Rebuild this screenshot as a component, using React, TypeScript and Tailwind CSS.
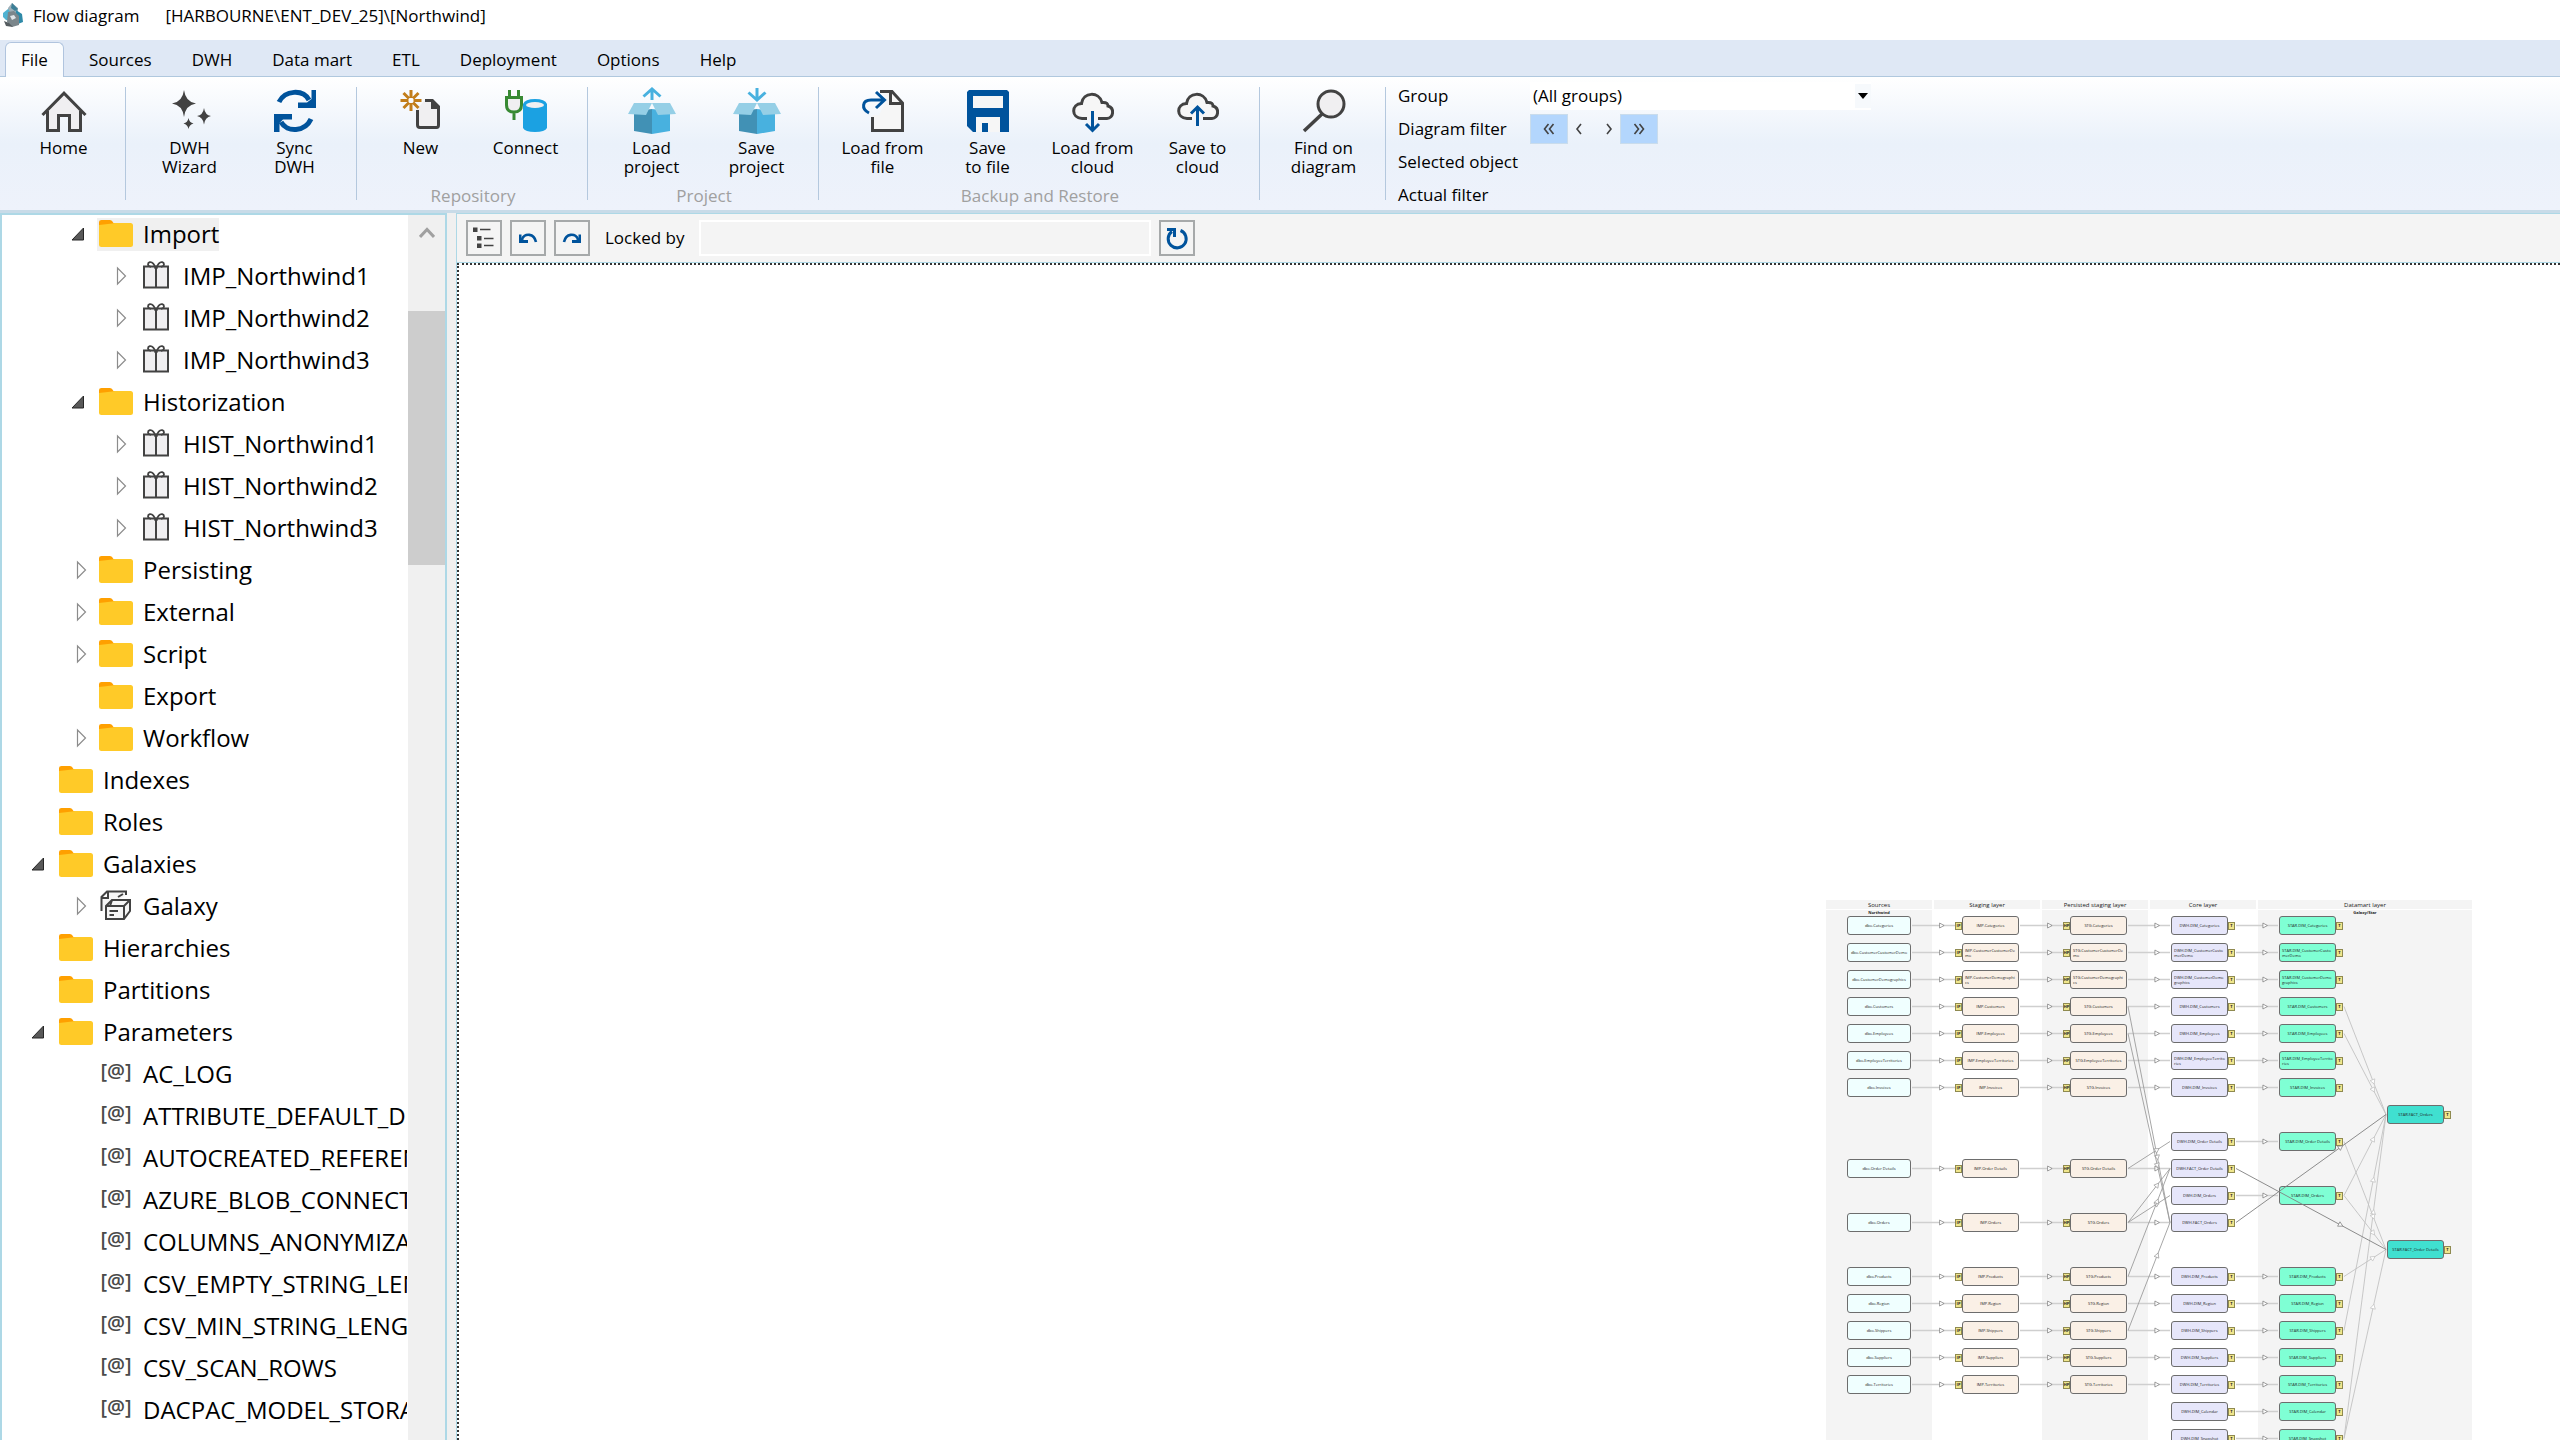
import { useState } from "react";
import type { ReactNode } from "react";
import clsx from "clsx";

/* ---------- icons ---------- */

type IconProps = { children: ReactNode };

function RibbonIcon({ children }: IconProps) {
  return (
    <svg viewBox="0 0 48 48" className="size-12" fill="none" aria-hidden="true">
      {children}
    </svg>
  );
}

const HomeIcon = () => (
  <RibbonIcon>
    <path d="M8 23V43.5H19V28.5H29V43.5H40V23L24 6Z" fill="#f0eff1" />
    <path
      d="M2.5 28 24 6.200L45.500 28M7.500 24V43.500H18.500V28.500H29.500V43.500H40.500V24"
      stroke="#424242"
      strokeWidth="3"
    />
  </RibbonIcon>
);

const WizardIcon = () => (
  <RibbonIcon>
    <g fill="#424242">
      <path d="M18 3Q19.500 15 30 16.500Q19.500 18 18 30Q16.500 18 6 16.500Q16.500 15 18 3Z" />
      <path d="M38 21Q39 28 45 29Q39 30 38 37.500Q37 30 31 29Q37 28 38 21Z" />
      <path d="M22.500 31Q23.300 35.500 27.500 36.500Q23.300 37.500 22.500 42Q21.700 37.500 17.500 36.500Q21.700 35.500 22.500 31Z" />
    </g>
  </RibbonIcon>
);

const SyncIcon = () => (
  <RibbonIcon>
    <path d="M8 15C14 3 32 2 38 13" stroke="#00539c" strokeWidth="5" />
    <path d="M45 3V21H27V15.500H36L40.500 12V3Z" fill="#00539c" />
    <path d="M40 32C34 45 16 46 10 35" stroke="#00539c" strokeWidth="5" />
    <path d="M3 45V27H21V32.500H12L8.500 36V45Z" fill="#00539c" />
  </RibbonIcon>
);

const NewIcon = () => (
  <RibbonIcon>
    <path d="M20 22V40.500H42V18L36 13H28Z" fill="#f0eff1" />
    <path d="M20.500 23V38Q20.500 40.500 23 40.500H39.500Q41.500 40.500 41.500 38V20" stroke="#424242" strokeWidth="3" />
    <path d="M28 12H36L43 19V22H34V15H28Z" fill="#424242" />
    <path
      d="M14 3V11M14 16V24M3.500 13.500H11.500M16.500 13.500H24.500M6.500 6 12 11.500M16 15.500 21.500 21M21.500 6 16 11.500M12 15.500 6.500 21"
      stroke="#c27d1a"
      strokeWidth="3"
    />
  </RibbonIcon>
);

const ConnectIcon = () => (
  <RibbonIcon>
    <path d="M4.500 10V18Q4.500 25 12 25Q19.500 25 19.500 18V10Z" fill="#f0eff1" />
    <path d="M7.500 3V10M16.500 3V10M3 10.500H21M4.500 10V18Q4.500 25 12 25Q19.500 25 19.500 18V10M12 25V33" stroke="#388a34" strokeWidth="3" />
    <path d="M21 17V41Q23 45 33 45Q43 45 45 41V17Q43 12 33 12Q23 12 21 17Z" fill="#1ba1e2" />
    <ellipse cx="33" cy="18" rx="9" ry="3" fill="#f0eff1" />
  </RibbonIcon>
);

function BoxIcon({ up }: { up?: boolean }) {
  return (
    <RibbonIcon>
      <path d="M6 24V44L24 47V22Z" fill="#4191b5" />
      <path d="M24 22V47L42 44V24Z" fill="#48b1df" />
      <path d="M6 16H24L18 28L0 27Z" fill="#95cfe6" />
      <path d="M42 16H24L30 28L48 27Z" fill="#95cfe6" />
      <path
        d={up ? "M24 13V2M15.500 9.500 24 2L32.500 9.500" : "M24 1V12M15.500 5.500 24 13L32.500 5.500"}
        stroke="#48b1df"
        strokeWidth="3"
      />
    </RibbonIcon>
  );
}

const LoadFileIcon = () => (
  <RibbonIcon>
    <path d="M22 4.500H32L43.500 16V43.500H13.500V28H20L28 13Z" fill="#f6f6f6" />
    <path d="M21 4.500H33L43.500 16V43.500H13.500V30M31.500 4V16.500H44" stroke="#424242" strokeWidth="3" />
    <path d="M10 26C2 22 3 13 12 13H25M17 5 25.500 13 17 21" stroke="#00539c" strokeWidth="3" />
  </RibbonIcon>
);

const SaveFileIcon = () => (
  <RibbonIcon>
    <path d="M5 3H43L45 5V45H9L3 39V5Z" fill="#00539c" />
    <path d="M9 9H39V21H9ZM12 30H36V45H24V36H18V45H12Z" fill="#f6f6f6" />
  </RibbonIcon>
);

function CloudIcon({ up }: { up?: boolean }) {
  return (
    <RibbonIcon>
      <path
        d="M18 31.500H13C2 31 2 17 12.500 16.500C14 5 30 4 33 15.500C38 15 39 17 39 19C46 21 44.500 31.500 38 31.500H29"
        fill="#f6f6f6"
        stroke="#424242"
        strokeWidth="3"
      />
      <path
        d={up ? "M23.500 39V20M17 26.500 23.500 20L30 26.500" : "M23.500 24V43M17 37 23.500 43.500L30 37"}
        stroke="#00539c"
        strokeWidth="3"
      />
    </RibbonIcon>
  );
}

const FindIcon = () => (
  <RibbonIcon>
    <circle cx="31" cy="17" r="13" fill="#f0eff1" stroke="#424242" strokeWidth="3" />
    <path d="M22 27 4 44" stroke="#424242" strokeWidth="3.500" />
  </RibbonIcon>
);

const AppLogo = () => (
  <svg viewBox="0 0 20 24" className="h-6 w-5" aria-hidden="true">
    <path d="M9 0 15 5V11L9 9L5 11V5Z" fill="#9fb0b8" />
    <path d="M9 0 15 6 12 8L8 5Z" fill="#3c7f97" />
    <path d="M0 10 5 6 8 10V18L3 17L0 14Z" fill="#4fb3d2" />
    <path d="M13 7 19 11 20 19 15 21 12 16Z" fill="#2f8aa8" />
    <path d="M5 9 11 8 16 13V22L9 24L4 19Z" fill="#7b868b" />
    <path d="M7 13 11 12 13 15 9 17Z" fill="#dfe5e8" />
    <path d="M1 18 6 20 10 24 3 23Z" fill="#555c60" />
  </svg>
);

const FolderIcon = () => (
  <svg viewBox="0 0 34 27" className="h-[27px] w-[34px]" aria-hidden="true">
    <path d="M0 10V2Q0 0 2.500 0H11Q13 0 14.500 3H20V10Z" fill="#ffa000" />
    <path d="M0 5Q7 4 13 3.500L16 3H31.500Q34 3 34 5.500V24.500Q34 27 31.500 27H2.500Q0 27 0 24.500Z" fill="#ffca28" />
  </svg>
);

const GiftIcon = () => (
  <svg viewBox="0 0 34 28" className="h-7 w-[34px]" fill="none" stroke="#424242" aria-hidden="true">
    <path d="M5 5.500H29V26.500H5Z" fill="#f0eff1" strokeWidth="2" />
    <path d="M17 5.500V26.500" strokeWidth="2" />
    <path
      d="M16.500 8C16 3 13 .8 10.800 1.200C8.200 2 8.400 5.500 12 5.800M17.500 8C18 3 21 .8 23.200 1.200C25.800 2 25.600 5.500 22 5.800"
      strokeWidth="1.800"
    />
  </svg>
);

const GalaxyIcon = () => (
  <svg viewBox="0 0 34 32" className="h-8 w-[34px]" fill="none" stroke="#424242" strokeWidth="2" aria-hidden="true">
    <path d="M2.500 22V8L8 2.500H27V6M2.500 9H9V3M19 8 24 5" fill="#f6f6f6" />
    <path d="M7 17 13 11H31V22L25 30H7Z" fill="#f6f6f6" />
    <path d="M7 17H25V30M25 17 31 11M13 11 11 17M10.500 22H19M10.500 26H15" />
  </svg>
);

/* ---------- ribbon ---------- */

const MENU = ["File", "Sources", "DWH", "Data mart", "ETL", "Deployment", "Options", "Help"];

type Command = { icon: ReactNode; lines: string[] };

const GROUPS: { title?: string; commands: Command[] }[] = [
  { commands: [{ icon: <HomeIcon />, lines: ["Home"] }] },
  {
    commands: [
      { icon: <WizardIcon />, lines: ["DWH", "Wizard"] },
      { icon: <SyncIcon />, lines: ["Sync", "DWH"] },
    ],
  },
  {
    title: "Repository",
    commands: [
      { icon: <NewIcon />, lines: ["New"] },
      { icon: <ConnectIcon />, lines: ["Connect"] },
    ],
  },
  {
    title: "Project",
    commands: [
      { icon: <BoxIcon up />, lines: ["Load", "project"] },
      { icon: <BoxIcon />, lines: ["Save", "project"] },
    ],
  },
  {
    title: "Backup and Restore",
    commands: [
      { icon: <LoadFileIcon />, lines: ["Load from", "file"] },
      { icon: <SaveFileIcon />, lines: ["Save", "to file"] },
      { icon: <CloudIcon />, lines: ["Load from", "cloud"] },
      { icon: <CloudIcon up />, lines: ["Save to", "cloud"] },
    ],
  },
  { commands: [{ icon: <FindIcon />, lines: ["Find on", "diagram"] }] },
];

function Chevrons({ d }: { d: string }) {
  return (
    <svg viewBox="0 0 14 14" className="size-3.5" fill="none" stroke="#424242" strokeWidth="1.600" aria-hidden="true">
      <path d={d} />
    </svg>
  );
}

function Filters() {
  return (
    <div className="grid grid-cols-[132px_341px] auto-rows-[33px] items-center pt-0.5 pl-3">
      <label htmlFor="group">Group</label>
      <div className="relative h-7">
        <select id="group" className="size-full appearance-none bg-white pl-[3px] outline-none">
          <option>(All groups)</option>
        </select>
        <span className="pointer-events-none absolute inset-y-0.5 right-0 flex w-4 items-center justify-center bg-[#f6f9fc]">
          <svg viewBox="0 0 10 6" className="h-1.5 w-2.5" aria-hidden="true">
            <path d="M0 0H10L5 6Z" />
          </svg>
        </span>
      </div>
      <span>Diagram filter</span>
      <div className="flex h-[30px] items-stretch">
        <button aria-label="First" className="flex w-[38px] items-center justify-center border border-[#c9dcec] bg-[#b3d6fd]">
          <Chevrons d="M6.500 2 2.500 7 6.500 12M11.500 2 7.500 7 11.500 12" />
        </button>
        <button aria-label="Previous" className="flex w-[22px] items-center justify-center">
          <Chevrons d="M9 2 5 7 9 12" />
        </button>
        <button aria-label="Next" className="ml-2 flex w-[22px] items-center justify-center">
          <Chevrons d="M5 2 9 7 5 12" />
        </button>
        <button aria-label="Last" className="flex w-[38px] items-center justify-center border border-[#c9dcec] bg-[#b3d6fd]">
          <Chevrons d="M2.500 2 6.500 7 2.500 12M7.500 2 11.500 7 7.500 12" />
        </button>
      </div>
      <span className="col-span-2">Selected object</span>
      <span className="col-span-2">Actual filter</span>
    </div>
  );
}

function Ribbon() {
  const [active, setActive] = useState("File");

  return (
    <header>
      <div className="flex h-10 items-start gap-2.5 bg-white pt-[3px] pl-[3px]">
        <AppLogo />
        <h1 className="flex gap-[26px] leading-[26px]">
          <span>Flow diagram</span>
          <span>[HARBOURNE\ENT_DEV_25]\[Northwind]</span>
        </h1>
      </div>
      <nav className="flex h-9 items-end bg-[#dfe8f5] pl-[5px]">
        {MENU.map(item => (
          <button
            key={item}
            onClick={() => setActive(item)}
            className={clsx(
              "border-x border-t",
              item === active
                ? "z-10 mr-[5px] -mb-px h-[35px] rounded-t-md border-[#b0c4de] bg-[#fafcfe] px-[15px]"
                : "h-[34px] border-transparent px-[19px]"
            )}
          >
            {item}
          </button>
        ))}
      </nav>
      <div className="flex h-[137px] border-t border-b-3 border-t-[#b0c8de] border-b-[#c8dbe8] bg-linear-to-b from-white via-[#eaf1fa] to-[#eef2fb]">
        {GROUPS.map((group, i) => (
          <section key={i} className="my-2.5 flex flex-col justify-between border-r border-[#b4c8de] pr-[9px] pl-[11px]">
            <div className="flex">
              {group.commands.map(cmd => (
                <button key={cmd.lines.join(" ")} className="flex w-[105px] flex-col items-center leading-[19px]">
                  {cmd.icon}
                  <span className="pt-[3px]">
                    {cmd.lines.map(line => (
                      <span key={line} className="block">
                        {line}
                      </span>
                    ))}
                  </span>
                </button>
              ))}
            </div>
            {group.title && <p className="-mb-1.5 text-center leading-5 text-[#a0a0a0]">{group.title}</p>}
          </section>
        ))}
        <Filters />
      </div>
    </header>
  );
}

/* ---------- tree ---------- */

type TreeRow = {
  label: string;
  level: 1 | 2 | 3;
  icon?: "folder" | "gift" | "galaxy" | "param";
  state?: "open" | "closed";
  selected?: boolean;
};

const TREE: TreeRow[] = [
  { label: "Import", level: 2, state: "open", selected: true },
  { label: "IMP_Northwind1", level: 3, icon: "gift", state: "closed" },
  { label: "IMP_Northwind2", level: 3, icon: "gift", state: "closed" },
  { label: "IMP_Northwind3", level: 3, icon: "gift", state: "closed" },
  { label: "Historization", level: 2, state: "open" },
  { label: "HIST_Northwind1", level: 3, icon: "gift", state: "closed" },
  { label: "HIST_Northwind2", level: 3, icon: "gift", state: "closed" },
  { label: "HIST_Northwind3", level: 3, icon: "gift", state: "closed" },
  { label: "Persisting", level: 2, state: "closed" },
  { label: "External", level: 2, state: "closed" },
  { label: "Script", level: 2, state: "closed" },
  { label: "Export", level: 2 },
  { label: "Workflow", level: 2, state: "closed" },
  { label: "Indexes", level: 1 },
  { label: "Roles", level: 1 },
  { label: "Galaxies", level: 1, state: "open" },
  { label: "Galaxy", level: 2, icon: "galaxy", state: "closed" },
  { label: "Hierarchies", level: 1 },
  { label: "Partitions", level: 1 },
  { label: "Parameters", level: 1, state: "open" },
  { label: "AC_LOG", level: 2, icon: "param" },
  { label: "ATTRIBUTE_DEFAULT_DIMENSION", level: 2, icon: "param" },
  { label: "AUTOCREATED_REFERENCES", level: 2, icon: "param" },
  { label: "AZURE_BLOB_CONNECTION", level: 2, icon: "param" },
  { label: "COLUMNS_ANONYMIZATION", level: 2, icon: "param" },
  { label: "CSV_EMPTY_STRING_LENGTH", level: 2, icon: "param" },
  { label: "CSV_MIN_STRING_LENGTH", level: 2, icon: "param" },
  { label: "CSV_SCAN_ROWS", level: 2, icon: "param" },
  { label: "DACPAC_MODEL_STORAGE", level: 2, icon: "param" },
];

const INDENT = { 1: "pl-[26px]", 2: "pl-[66px]", 3: "pl-[106px]" };

const TREE_ICONS = {
  folder: <FolderIcon />,
  gift: <GiftIcon />,
  galaxy: <GalaxyIcon />,
  param: <span className="pb-1 text-[20px] leading-6 font-semibold text-[#4a4a4a]">[@]</span>,
};

function Expander({ state }: { state?: "open" | "closed" }) {
  if (!state) return <span className="w-5 shrink-0" />;
  return (
    <button aria-label={state === "open" ? "Collapse" : "Expand"} className="w-5 shrink-0">
      <svg viewBox="0 0 20 20" className="size-5" aria-hidden="true">
        {state === "open" ? (
          <path d="M15.500 4V16H4Z" fill="#595959" stroke="#262626" />
        ) : (
          <path d="M9.500 2V18L17.500 10Z" fill="#fff" stroke="#8c8c8c" strokeWidth="1.200" />
        )}
      </svg>
    </button>
  );
}

function Sidebar() {
  return (
    <aside className="flex w-[447px] shrink-0 border-2 border-b-0 border-[#add8e6] bg-white">
      <ul className="-mt-0.5 min-w-0 flex-1 overflow-hidden pr-px text-2xl">
        {TREE.map(row => (
          <li key={row.label} className={clsx("flex h-[42px] items-center overflow-hidden", INDENT[row.level])}>
            <Expander state={row.state} />
            <span
              className={clsx(
                "ml-[9px] flex h-[33px] items-center gap-2.5 pl-0.5 whitespace-nowrap",
                row.selected && "bg-[#f0f0f0]"
              )}
            >
              <span className="flex w-[34px] shrink-0 justify-center pb-0.5">{TREE_ICONS[row.icon ?? "folder"]}</span>
              {row.label}
            </span>
          </li>
        ))}
      </ul>
      <div className="w-[37px] bg-[#f0f0f0]">
        <button aria-label="Scroll up" className="flex h-24 w-full justify-center pt-2.5">
          <svg viewBox="0 0 16 16" className="size-4" fill="none" stroke="#a0a0a0" strokeWidth="3" aria-hidden="true">
            <path d="M1 12 8 4.500 15 12" />
          </svg>
        </button>
        <div className="h-[254px] bg-[#cdcdcd]" />
      </div>
    </aside>
  );
}

/* ---------- diagram ---------- */

const ROW = 27;
const rowCenter = (row: number) => 25.5 + ROW * row;

const LAYERS = [
  { title: "Sources", sub: "Northwind", size: "w-[106px]", shaded: true },
  { title: "Staging layer", size: "w-[106px]", shaded: false },
  { title: "Persisted staging layer", size: "w-[106px]", shaded: true },
  { title: "Core layer", size: "w-[106px]", shaded: false },
  { title: "Datamart layer", sub: "Galaxy/Star", size: "w-[214px]", shaded: true },
];

const TABLES: [string, number][] = [
  ["Categories", 0],
  ["CustomerCustomerDemo", 1],
  ["CustomerDemographics", 2],
  ["Customers", 3],
  ["Employees", 4],
  ["EmployeeTerritories", 5],
  ["Invoices", 6],
  ["Order Details", 9],
  ["Orders", 11],
  ["Products", 13],
  ["Region", 14],
  ["Shippers", 15],
  ["Suppliers", 16],
  ["Territories", 17],
];

const DIMENSIONS: [string, number][] = [
  ...TABLES.filter(([, row]) => row < 7 || row > 12),
  ["Order Details", 8],
  ["Orders", 10],
  ["Calendar", 18],
  ["Snapshot", 19],
];

type Node = { label: string; x: number; row: number; kind: "source" | "stage" | "core" | "star" | "fact"; badge?: string };

const NODES: Node[] = [
  ...TABLES.flatMap(([name, row]): Node[] => [
    { label: `dbo.${name}`, x: 21, row, kind: "source" },
    { label: `IMP.${name}`, x: 136, row, kind: "stage", badge: "IP" },
    { label: `STG.${name}`, x: 244, row, kind: "stage", badge: "HP" },
  ]),
  ...DIMENSIONS.flatMap(([name, row]): Node[] => [
    { label: `DWH.DIM_${name}`, x: 345, row, kind: "core", badge: "T" },
    { label: `STAR.DIM_${name}`, x: 453, row, kind: "star", badge: "T" },
  ]),
  { label: "DWH.FACT_Order Details", x: 345, row: 9, kind: "core", badge: "T" },
  { label: "DWH.FACT_Orders", x: 345, row: 11, kind: "core", badge: "T" },
  { label: "STAR.FACT_Orders", x: 561, row: 7, kind: "fact", badge: "T" },
  { label: "STAR.FACT_Order Details", x: 561, row: 12, kind: "fact", badge: "T" },
];

const NODE_STYLE = {
  source: "w-16 bg-[#f0ffff]",
  stage: "w-[57px] bg-[#faf0e6]",
  core: "w-[57px] bg-[#e6e6fa]",
  star: "w-[57px] bg-[#7fffd4]",
  fact: "w-[57px] bg-[#40e0d0]",
};

type Edge = { x1: number; r1: number; x2: number; r2: number; tone: string };

const LIGHT = "#cfcfcf";
const MID = "#9c9c9c";
const DARK = "#808080";

const EDGES: Edge[] = [
  ...TABLES.flatMap(([, r]) => [
    { x1: 86, r1: r, x2: 129, r2: r, tone: LIGHT },
    { x1: 194, r1: r, x2: 237, r2: r, tone: LIGHT },
    { x1: 302, r1: r, x2: 344, r2: r, tone: LIGHT },
  ]),
  ...DIMENSIONS.map(([, r]) => ({ x1: 410, r1: r, x2: 452, r2: r, tone: LIGHT })),
  ...[[3, 11], [4, 11], [9, 8], [11, 9], [11, 10], [13, 9], [15, 11]].map(([r1, r2]) => ({
    x1: 302, r1, x2: 344, r2, tone: MID,
  })),
  ...[[3, 7], [4, 7], [10, 7], [15, 7], [19, 7], [8, 12], [10, 12], [13, 12], [19, 12]].map(([r1, r2]) => ({
    x1: 518, r1, x2: 560, r2, tone: "#c2c2c2",
  })),
  { x1: 410, r1: 9, x2: 560, r2: 12, tone: DARK },
  { x1: 410, r1: 11, x2: 560, r2: 7, tone: DARK },
];

function EdgeLine({ x1, r1, x2, r2, tone }: Edge) {
  const y1 = rowCenter(r1);
  const y2 = rowCenter(r2);
  const t = 0.7;
  const x = x1 + (x2 - x1) * t;
  const y = y1 + (y2 - y1) * t;
  const angle = (Math.atan2(y2 - y1, x2 - x1) * 180) / Math.PI;

  return (
    <g stroke={tone}>
      <line x1={x1} y1={y1} x2={x2} y2={y2} strokeWidth={r1 === r2 ? 1.4 : 0.9} />
      <path
        d="M-2.500-2.500 2 0 -2.500 2.500Z"
        transform={`translate(${x} ${y}) rotate(${angle})`}
        fill="#fff"
        stroke={r1 === r2 ? "#777" : tone}
        strokeWidth=".7"
      />
    </g>
  );
}

function Diagram() {
  return (
    <div className="absolute top-[635px] left-[1367px] flex h-[560px] gap-0.5">
      {LAYERS.map(layer => (
        <div key={layer.title} className={clsx("flex flex-col gap-px text-center text-[6px] text-[#1a1a1a]", layer.size)}>
          <h2 className="h-[9px] bg-[#f4f4f4] leading-[10px] font-medium">{layer.title}</h2>
          <div className={clsx("flex-1 text-[4px] leading-[5px] font-bold", layer.shaded && "bg-[#f4f4f4]")}>
            {layer.sub}
          </div>
        </div>
      ))}
      {NODES.map(node => {
        const before = node.kind === "stage";
        return (
          <div
            key={node.label}
            className={clsx("absolute flex h-[19px] items-center", before && "flex-row-reverse -ml-[7px]")}
            style={{ left: node.x, top: rowCenter(node.row) - 9.5 }}
          >
            <div
              className={clsx(
                "flex h-full items-center justify-center rounded-[3px] border border-[#6d6d6d] px-0.5 text-[4px] leading-[5px] font-medium text-[#222]",
                NODE_STYLE[node.kind]
              )}
            >
              <span className="wrap-anywhere">{node.label}</span>
            </div>
            {node.badge && (
              <span className="flex h-2 w-[7px] items-center justify-center border border-[#8f8a50] bg-[#f0e68c] text-[4px] leading-none font-bold text-[#222]">
                {node.badge}
              </span>
            )}
          </div>
        );
      })}
      <svg viewBox="0 0 646 560" className="absolute inset-0 size-full" fill="none" aria-hidden="true">
        {EDGES.map((edge, i) => (
          <EdgeLine key={i} {...edge} />
        ))}
      </svg>
    </div>
  );
}

/* ---------- workspace ---------- */

function ToolButton({ label, children }: { label: string; children: ReactNode }) {
  return (
    <button aria-label={label} className="flex size-9 items-center justify-center border-2 border-[#a6a9aa] bg-[#f4f4f4]">
      <svg viewBox="0 0 24 24" className="size-6" fill="none" aria-hidden="true">
        {children}
      </svg>
    </button>
  );
}

function Workspace() {
  return (
    <main className="flex min-w-0 flex-1 flex-col">
      <div className="flex h-[50px] shrink-0 items-center border border-r-0 border-[#add8e6] bg-[#f4f4f4] pl-[9px]">
        <div className="flex gap-2">
          <ToolButton label="Tree view">
            <path d="M1 1.500H5.500V6H1ZM5 10H9.500V14.500H5ZM5 17.500H9.500V22H5Z" fill="#424242" />
            <path d="M8 3.500H18.500M12 12.500H21.500M12 19.500H21.500" stroke="#424242" strokeWidth="1.500" />
          </ToolButton>
          <ToolButton label="Undo">
            <path d="M6 13C9 7 18 7 20 16" stroke="#00539c" strokeWidth="2.600" />
            <path d="M3 8.500H5.500V12L8 14H12V17H3Z" fill="#00539c" />
          </ToolButton>
          <ToolButton label="Redo">
            <path d="M18 13C15 7 6 7 4 16" stroke="#00539c" strokeWidth="2.600" />
            <path d="M21 8.500H18.500V12L16 14H12V17H21Z" fill="#00539c" />
          </ToolButton>
        </div>
        <label htmlFor="locked" className="w-[95px] pl-[15px] whitespace-nowrap">
          Locked by
        </label>
        <input id="locked" readOnly className="mr-2 ml-3.5 h-9 w-[452px] border-2 border-white bg-[#f4f4f4] outline-none" />
        <ToolButton label="Refresh">
          <path d="M15.500 4.500A9 9 0 1 1 7 5.500" stroke="#00539c" strokeWidth="3" />
          <path d="M2 2H11V11H8V5H2Z" fill="#00539c" />
        </ToolButton>
      </div>
      <div className="min-h-0 flex-1 border-l border-[#add8e6]">
        <div className="relative size-full overflow-hidden border-t-2 border-l-2 border-dotted border-[#333] bg-white">
          <Diagram />
        </div>
      </div>
    </main>
  );
}

function App() {
  return (
    <div className="flex h-screen flex-col overflow-hidden bg-[#f0f0f0] font-['Open_Sans',sans-serif] text-[17px] text-black">
      <Ribbon />
      <div className="flex min-h-0 flex-1 gap-[9px]">
        <Sidebar />
        <Workspace />
      </div>
    </div>
  );
}

export default App;
